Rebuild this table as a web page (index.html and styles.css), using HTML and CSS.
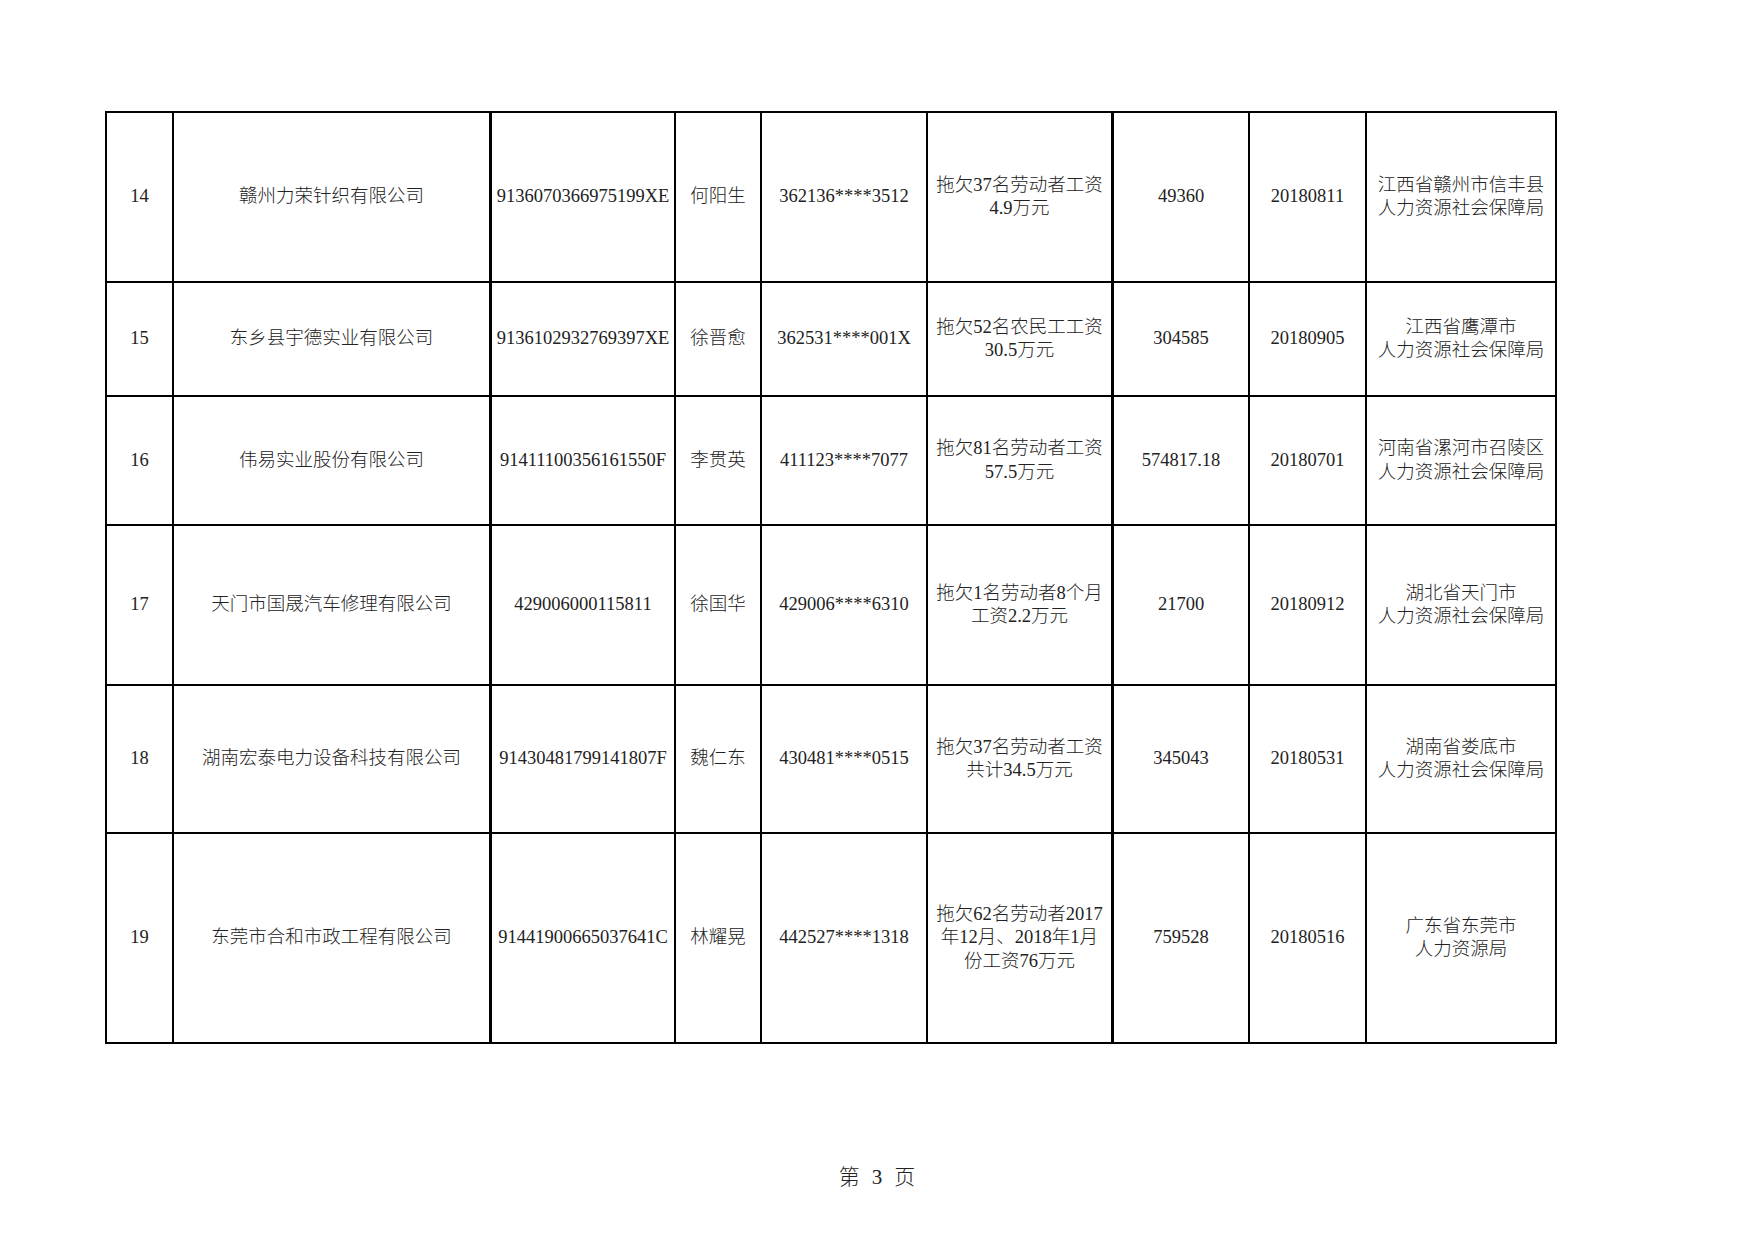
FILE: index.html
```html
<!DOCTYPE html>
<html lang="zh-CN">
<head>
<meta charset="utf-8">
<title>第 3 页</title>
<link rel="stylesheet" href="styles.css">
</head>
<body>
<div class="sheet">
  <table class="grid">
    <colgroup>
      <col class="c-no"><col class="c-name"><col class="c-code"><col class="c-person"><col class="c-id"><col class="c-desc"><col class="c-amount"><col class="c-date"><col class="c-org">
    </colgroup>
    <tbody>
      <tr class="r1">
        <td>14</td>
        <td class="thick">赣州力荣针织有限公司</td>
        <td class="nw">9136070366975199XE</td>
        <td>何阳生</td>
        <td class="nw">362136****3512</td>
        <td class="thick">拖欠37名劳动者工资<br>4.9万元</td>
        <td>49360</td>
        <td>20180811</td>
        <td>江西省赣州市信丰县<br>人力资源社会保障局</td>
      </tr>
      <tr class="r2">
        <td>15</td>
        <td class="thick">东乡县宇德实业有限公司</td>
        <td class="nw">9136102932769397XE</td>
        <td>徐晋愈</td>
        <td class="nw">362531****001X</td>
        <td class="thick">拖欠52名农民工工资<br>30.5万元</td>
        <td>304585</td>
        <td>20180905</td>
        <td>江西省鹰潭市<br>人力资源社会保障局</td>
      </tr>
      <tr class="r3">
        <td>16</td>
        <td class="thick">伟易实业股份有限公司</td>
        <td class="nw">91411100356161550F</td>
        <td>李贯英</td>
        <td class="nw">411123****7077</td>
        <td class="thick">拖欠81名劳动者工资<br>57.5万元</td>
        <td>574817.18</td>
        <td>20180701</td>
        <td>河南省漯河市召陵区<br>人力资源社会保障局</td>
      </tr>
      <tr class="r4">
        <td>17</td>
        <td class="thick">天门市国晟汽车修理有限公司</td>
        <td class="nw">429006000115811</td>
        <td>徐国华</td>
        <td class="nw">429006****6310</td>
        <td class="thick">拖欠1名劳动者8个月<br>工资2.2万元</td>
        <td>21700</td>
        <td>20180912</td>
        <td>湖北省天门市<br>人力资源社会保障局</td>
      </tr>
      <tr class="r5">
        <td>18</td>
        <td class="thick">湖南宏泰电力设备科技有限公司</td>
        <td class="nw">91430481799141807F</td>
        <td>魏仁东</td>
        <td class="nw">430481****0515</td>
        <td class="thick">拖欠37名劳动者工资<br>共计34.5万元</td>
        <td>345043</td>
        <td>20180531</td>
        <td>湖南省娄底市<br>人力资源社会保障局</td>
      </tr>
      <tr class="r6">
        <td>19</td>
        <td class="thick">东莞市合和市政工程有限公司</td>
        <td class="nw">91441900665037641C</td>
        <td>林耀晃</td>
        <td class="nw">442527****1318</td>
        <td class="thick">拖欠62名劳动者2017<br>年12月、2018年1月<br>份工资76万元</td>
        <td>759528</td>
        <td>20180516</td>
        <td>广东省东莞市<br>人力资源局</td>
      </tr>
    </tbody>
  </table>
  <div class="footer"><span>第</span><span>3</span><span>页</span></div>
</div>
</body>
</html>
```

FILE: styles.css
```css
html, body {
  margin: 0;
  padding: 0;
  background: #ffffff;
}

body {
  font-family: "Liberation Serif", "Noto Sans CJK SC", serif;
  font-weight: 300;
  color: #222222;
}

.sheet {
  padding: 111px 0 0 105px;
  width: 1649px;
  height: 1130px;
}

.grid {
  border-collapse: separate;
  border-spacing: 0;
  table-layout: fixed;
  width: 1452px;
  border-top: 2px solid #000;
  border-left: 2px solid #000;
  font-size: 18.5px;
  line-height: 23.5px;
}

.grid td {
  box-sizing: border-box;
  border-right: 2px solid #000;
  border-bottom: 2px solid #000;
  padding: 0 2px;
  text-align: center;
  vertical-align: middle;
}

.grid td.thick {
  border-right-width: 3px;
}

.grid td.nw {
  white-space: nowrap;
  padding: 0;
}

.c-no { width: 67px; }
.c-name { width: 318px; }
.c-code { width: 184px; }
.c-person { width: 86px; }
.c-id { width: 166px; }
.c-desc { width: 186px; }
.c-amount { width: 136px; }
.c-date { width: 117px; }
.c-org { width: 190px; }

.r1 { height: 170px; }
.r2 { height: 114px; }
.r3 { height: 129px; }
.r4 { height: 160px; }
.r5 { height: 148px; }
.r6 { height: 210px; }

.footer {
  margin-top: 121px;
  width: 1544px;
  display: flex;
  justify-content: center;
  gap: 12px;
  font-size: 21px;
  line-height: 24px;
}
```
